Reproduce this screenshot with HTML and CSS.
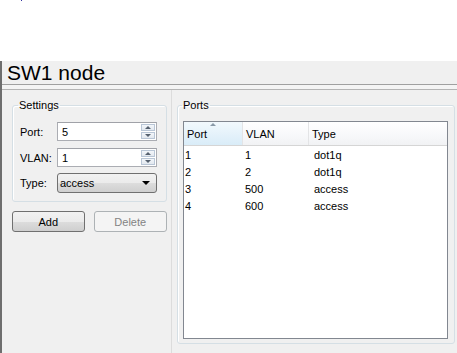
FILE: index.html
```html
<!DOCTYPE html>
<html lang="en">
<head>
    <meta charset="UTF-8">
    <title>SW1 node</title>
    <link rel="stylesheet" href="styles.css">
</head>
<body>

    <div class="top-space"><span class="dot"></span></div>

    <div class="window">
        <div class="titlebar">SW1 node</div>
        <div class="sep"></div>

        <div class="main">
            <!-- left side: settings + buttons -->
            <div class="left">
                <fieldset class="group settings">
                    <legend>Settings</legend>
                    <div class="row">
                        <label>Port:</label>
                        <div class="spin">
                            <span class="value">5</span>
                            <span class="arrows"><span class="up"></span><span class="down"></span></span>
                        </div>
                    </div>
                    <div class="row">
                        <label>VLAN:</label>
                        <div class="spin">
                            <span class="value">1</span>
                            <span class="arrows"><span class="up"></span><span class="down"></span></span>
                        </div>
                    </div>
                    <div class="row">
                        <label>Type:</label>
                        <div class="combo">
                            <span>access</span>
                            <span class="caret"></span>
                        </div>
                    </div>
                </fieldset>

                <div class="buttons">
                    <button class="btn">Add</button>
                    <button class="btn disabled">Delete</button>
                </div>
            </div>

            <!-- right side: ports table -->
            <div class="right">
                <fieldset class="group ports">
                    <legend>Ports</legend>
                    <div class="table">
                        <div class="thead">
                            <div class="th sorted c1">Port<span class="sort"></span></div>
                            <div class="th c2">VLAN</div>
                            <div class="th c3">Type</div>
                        </div>
                        <div class="tr"><span class="c1">1</span><span class="c2">1</span><span class="c3">dot1q</span></div>
                        <div class="tr"><span class="c1">2</span><span class="c2">2</span><span class="c3">dot1q</span></div>
                        <div class="tr"><span class="c1">3</span><span class="c2">500</span><span class="c3">access</span></div>
                        <div class="tr"><span class="c1">4</span><span class="c2">600</span><span class="c3">access</span></div>
                    </div>
                </fieldset>
            </div>
        </div>
    </div>

</body>
</html>
```

FILE: styles.css
```css
body {
    margin: 0;
    background: #fff;
    font-family: "Liberation Sans", Arial, sans-serif;
    font-size: 11px;
    color: #000;
}
.top-space {
    height: 61px;
}
.dot {
    display: block;
    width: 1px;
    height: 1px;
    margin-left: 21px;
    background: #3030a0;
}
.window {
    height: 292px;
    border-left: 2px solid #6e6e6e;
    background: #f0f0f0;
    display: flex;
    flex-direction: column;
}
.titlebar {
    height: 23px;
    line-height: 24px;
    padding-left: 5px;
    font-size: 21px;
    border-bottom: 1px solid #a0a0a0;
}
.sep {
    height: 4px;
    background: #f4f4f4;
    border-bottom: 1px solid #b4b4b4;
}
.main {
    flex: 1;
    display: flex;
}
.left {
    width: 170px;
    box-sizing: border-box;
    padding: 0 0 0 10px;
    border-right: 1px solid #dcdcdc;
    margin-right: 5px;
}
.group {
    margin: 0;
    border: 1px solid #d5dfe5;
    border-radius: 3px;
    box-shadow: inset 1px 1px 0 #fff;
}
.group legend {
    padding: 0 1px;
    margin-left: -2px;
    line-height: 13px;
}
.settings {
    margin-top: 9px;
    width: 155px;
    box-sizing: border-box;
    padding: 10px 9px 9px 7px;
}
.row {
    display: flex;
    align-items: center;
    height: 19px;
    margin-bottom: 7px;
}
.row:nth-child(3) {
    margin-bottom: 6px;
}
.row:last-child {
    margin-bottom: 0;
}
.row label {
    width: 37px;
}
.spin {
    width: 100px;
    height: 19px;
    box-sizing: border-box;
    border: 1px solid #abadb3;
    border-top-color: #a0a2a8;
    background: #fff;
    display: flex;
    align-items: center;
}
.spin .value {
    flex: 1;
    padding-left: 4px;
}
.arrows {
    width: 14px;
    height: 15px;
    margin-right: 1px;
    display: flex;
    flex-direction: column;
    gap: 1px;
}
.arrows span {
    flex: 1;
    border: 1px solid #b9c6d6;
    background: linear-gradient(#f3f6fa, #e2e8ef);
    display: flex;
    align-items: center;
    justify-content: center;
}
.arrows .up::after {
    content: "";
    border-left: 3px solid transparent;
    border-right: 3px solid transparent;
    border-bottom: 3px solid #55606e;
}
.arrows .down::after {
    content: "";
    border-left: 3px solid transparent;
    border-right: 3px solid transparent;
    border-top: 3px solid #55606e;
}
.combo {
    width: 100px;
    height: 20px;
    box-sizing: border-box;
    border: 1px solid #707070;
    border-radius: 3px;
    background: linear-gradient(#f2f2f2 0%, #ebebeb 50%, #dddddd 51%, #cfcfcf 100%);
    display: flex;
    align-items: center;
    justify-content: space-between;
    padding: 0 6px 0 2px;
}
.caret {
    border-left: 4px solid transparent;
    border-right: 4px solid transparent;
    border-top: 4px solid #000;
}
.buttons {
    display: flex;
    gap: 9px;
    margin-top: 9px;
    width: 155px;
}
.btn {
    height: 21px;
    width: 73px;
    padding: 0;
    font-family: inherit;
    font-size: 11px;
    border: 1px solid #707070;
    border-radius: 3px;
    background: linear-gradient(#f2f2f2 0%, #ebebeb 50%, #dddddd 51%, #cfcfcf 100%);
}
.btn.disabled {
    width: 74px;
    border-color: #adb2b5;
    background: #f4f4f4;
    color: #838383;
}
.right {
    flex: 1;
    padding-right: 2px;
}
.ports {
    margin-top: 9px;
    height: 245px;
    box-sizing: border-box;
    padding: 9px 6px 4px 5px;
}
.ports legend {
    margin-left: -1px;
}
.table {
    height: 100%;
    box-sizing: border-box;
    border: 1px solid #828790;
    background: #fff;
}
.thead {
    display: flex;
    height: 23px;
    border-bottom: 1px solid #d5d5d5;
    margin-bottom: 1px;
    background: linear-gradient(#fff 0%, #f7f8fa 60%, #f1f2f4 100%);
}
.th {
    line-height: 24px;
    border-right: 1px solid #e3e4e6;
    padding-left: 3px;
    box-sizing: border-box;
    position: relative;
}
.th.sorted {
    background: linear-gradient(#f2f9fd 0%, #e3f1fa 60%, #d9ecf8 100%);
}
.sort {
    position: absolute;
    top: 1px;
    left: 26px;
    border-left: 3px solid transparent;
    border-right: 3px solid transparent;
    border-bottom: 3px solid #8a9aa8;
}
.c1 { width: 59px; }
.c2 { width: 66px; }
.c3 { flex: 1; border-right: none; }
.tr {
    display: flex;
    height: 17px;
    line-height: 17px;
}
.tr span {
    padding-left: 2px;
    box-sizing: border-box;
}
.tr .c1 { padding-left: 1px; }
.tr .c3 { padding-left: 5px; }
```
